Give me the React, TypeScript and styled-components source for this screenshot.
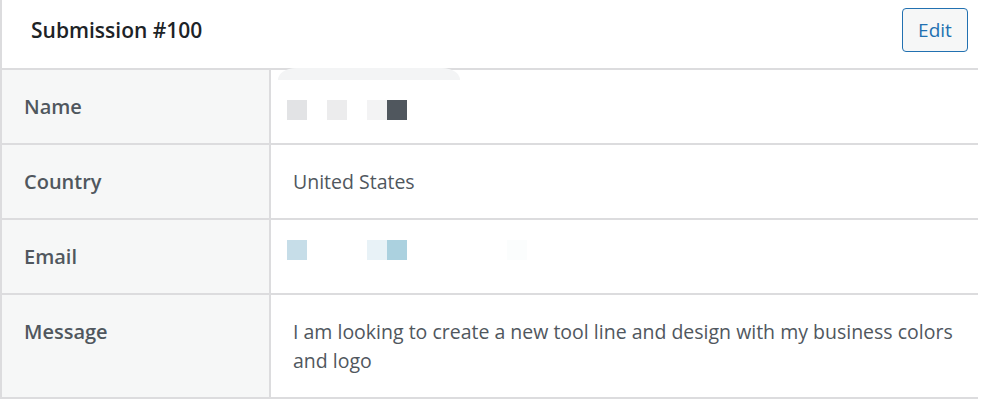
import React from "react";
import styled, { createGlobalStyle } from "styled-components";

const GlobalStyle = createGlobalStyle`
  html, body {
    margin: 0;
    padding: 0;
    background: #ffffff;
  }
  body {
    font-family: "Open Sans", "Noto Sans", "Liberation Sans", sans-serif;
    -webkit-font-smoothing: antialiased;
  }
  *, *::before, *::after {
    box-sizing: border-box;
  }
`;

const Panel = styled.section`
  width: 978px;
  border-left: 2px solid #dcdcde;
  background: #ffffff;
`;

const Header = styled.header`
  height: 68px;
  display: flex;
  align-items: center;
  justify-content: space-between;
  padding: 0 10px 0 29px;
`;

const Title = styled.h2`
  margin: 0 0 8px;
  font-size: 21px;
  font-weight: 600;
  color: #1d2327;
`;

const EditButton = styled.button`
  width: 66px;
  height: 44px;
  margin-top: -9px;
  border: 1.5px solid #2271b1;
  border-radius: 4px;
  background: #f6f7f7;
  color: #2271b1;
  font-family: inherit;
  font-size: 19px;
  cursor: pointer;
`;

const Table = styled.div`
  display: grid;
  grid-template-columns: 269px 1fr;
  border-top: 2px solid #dcdcde;
`;

const Cell = styled.div<{ $tall?: boolean }>`
  position: relative;
  height: ${(p) => (p.$tall ? 104 : 75)}px;
  border-bottom: 2px solid #dcdcde;
  font-size: 19.5px;
  line-height: 29px;
  color: #50575e;
`;

const Label = styled(Cell)`
  background: #f6f7f7;
  border-right: 2px solid #dcdcde;
  padding: 22px 0 0 22px;
  font-size: 20px;
  font-weight: 600;
`;

const Value = styled(Cell)`
  padding: 22px 24px 0 22px;
`;

/* Pixelated privacy mask drawn over redacted values */
const Mask = styled.div<{ $shift: number }>`
  display: flex;
  margin: ${(p) => p.$shift}px 0 0 -6px;
`;

const Pixel = styled.span<{ $c: string }>`
  display: block;
  width: 20px;
  height: 20px;
  background: ${(p) => p.$c};
`;

const MaskTab = styled.span`
  position: absolute;
  left: 7px;
  top: -2px;
  width: 182px;
  height: 12px;
  background: #f3f4f5;
  border-top-left-radius: 18px 12px;
  border-top-right-radius: 18px 12px;
`;

const nameMask = ["#e2e3e5", "transparent", "#ececed", "transparent", "#f3f3f4", "#50575e"];
const emailMask = [
  "#c6dde8",
  "transparent",
  "transparent",
  "transparent",
  "#e8f2f7",
  "#abd1df",
  "transparent",
  "transparent",
  "transparent",
  "transparent",
  "transparent",
  "#fbfdfd",
];

export default function App() {
  return (
    <>
      <GlobalStyle />
      <Panel>
        <Header>
          <Title>Submission #100</Title>
          <EditButton>Edit</EditButton>
        </Header>
        <Table>
          <Label>Name</Label>
          <Value>
            <MaskTab />
            <Mask $shift={8}>
              {nameMask.map((c, i) => (
                <Pixel key={i} $c={c} />
              ))}
            </Mask>
          </Value>
          <Label>Country</Label>
          <Value>United States</Value>
          <Label>Email</Label>
          <Value>
            <Mask $shift={-2}>
              {emailMask.map((c, i) => (
                <Pixel key={i} $c={c} />
              ))}
            </Mask>
          </Value>
          <Label $tall>Message</Label>
          <Value $tall>
            I am looking to create a new tool line and design with my business colors and logo
          </Value>
        </Table>
      </Panel>
    </>
  );
}
